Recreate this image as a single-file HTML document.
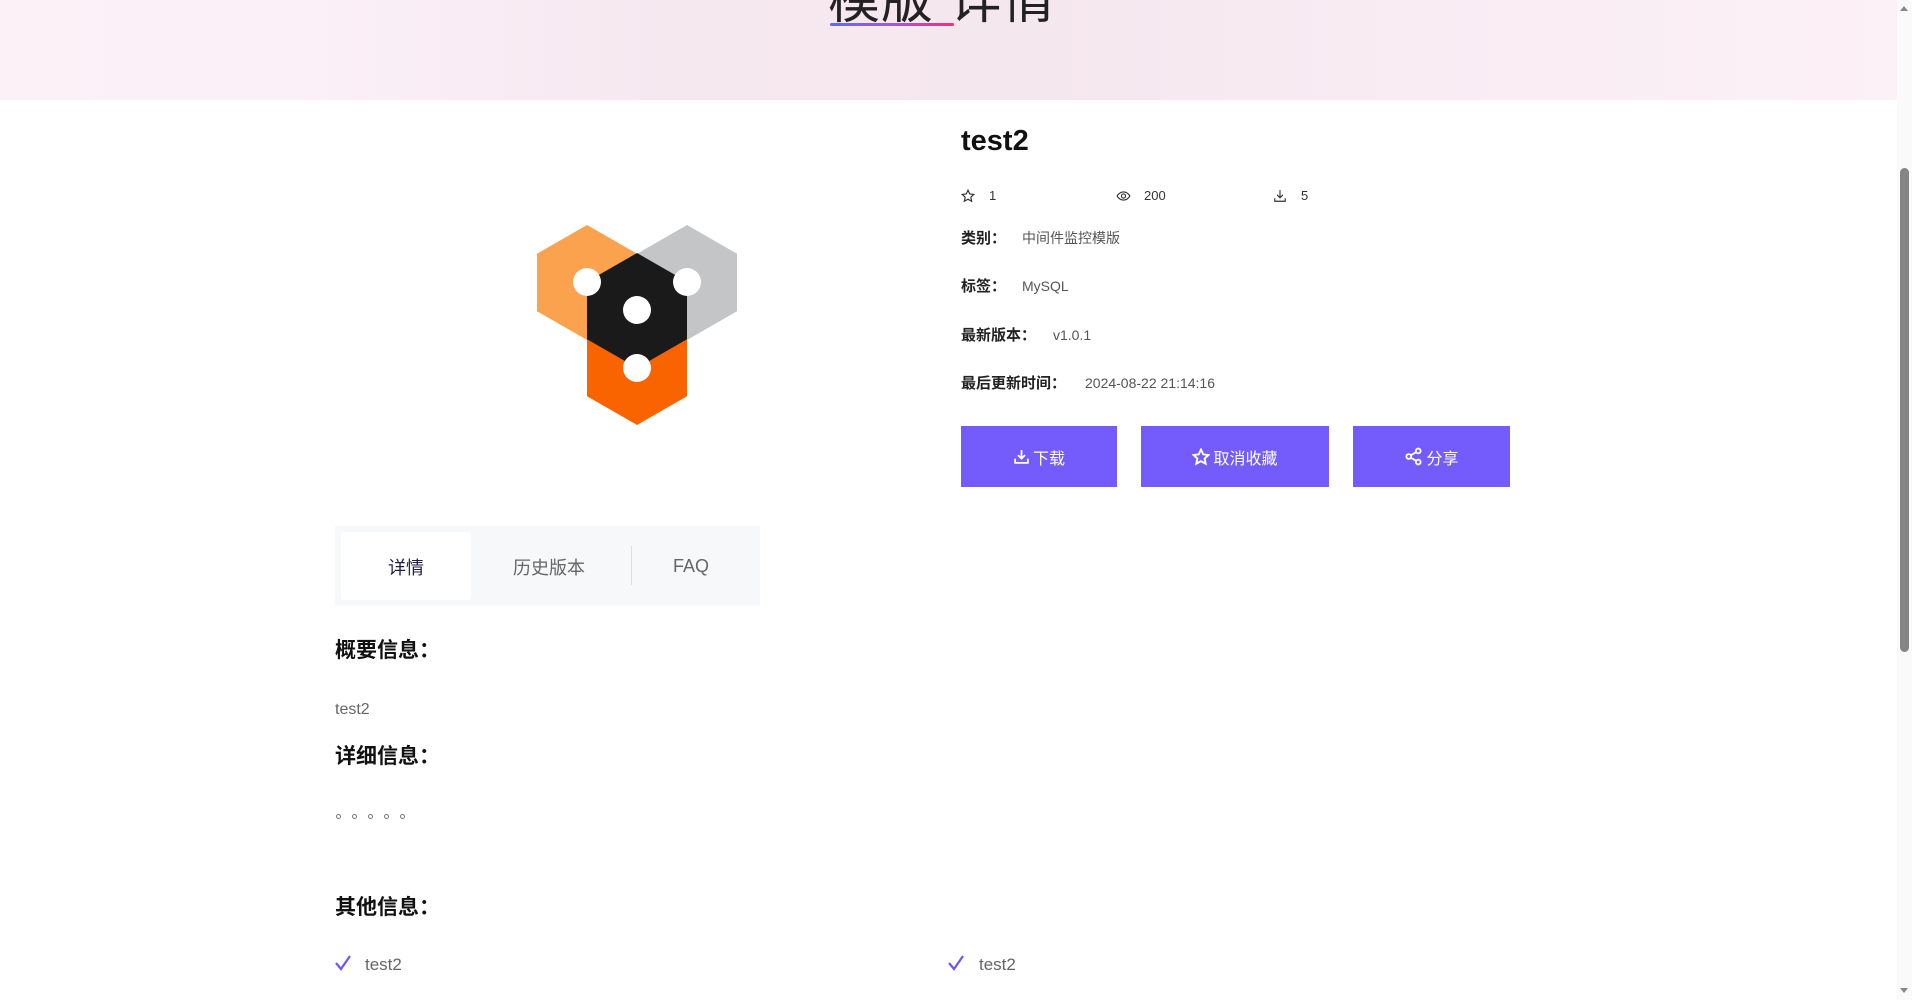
<!DOCTYPE html>
<html><head><meta charset="utf-8"><style>
*{margin:0;padding:0;box-sizing:border-box}
body{width:1912px;height:1000px;overflow:hidden;background:#fff;font-family:"Liberation Sans","Noto Sans CJK SC",sans-serif;position:relative;color:#333}
.a{position:absolute;white-space:nowrap}
.hdr{left:0;top:0;width:1897px;height:100px;background:linear-gradient(90deg,#fbf1f7 0%,#fcf0f8 15%,#f6e8ef 35%,#f5e7ee 55%,#f9ecf3 75%,#fcf1f7 100%)}
.lbl{font-size:15px;font-weight:bold;color:#222;font-family:"Noto Sans CJK SC",sans-serif;line-height:20px}
.val{font-size:14px;color:#555;line-height:20px}
.btn{top:426px;height:61px;background:#735cfb;color:#fff;font-size:16px;display:flex;align-items:center;justify-content:center;gap:3px}
.h2{font-size:21px;font-weight:bold;color:#111;left:335px;font-family:"Noto Sans CJK SC",sans-serif;line-height:28px}
.st{font-size:13px;color:#333}
.dot{position:absolute;top:814px;width:5px;height:5px;border:1px solid #777;border-radius:50%}
</style></head><body>
<div class="a hdr"></div>
<div class="a" style="left:828px;top:-42px;font-size:52px;color:#222;letter-spacing:1px">模版 详情</div>
<div class="a" style="left:830px;top:23px;width:124px;height:3px;background:linear-gradient(90deg,#5b6cf0,#a15ad8,#f0307a);border-radius:2px"></div>

<div class="a" style="left:1897px;top:0;width:15px;height:1000px;background:#fafafa"></div>
<div class="a" style="left:1900px;top:168px;width:9px;height:484px;background:#858585;border-radius:5px"></div>
<div class="a" style="left:1900px;top:6px;width:0;height:0;border-left:4px solid transparent;border-right:4px solid transparent;border-bottom:5px solid #888"></div>
<div class="a" style="left:1900px;top:988px;width:0;height:0;border-left:4px solid transparent;border-right:4px solid transparent;border-top:5px solid #888"></div>

<svg class="a" style="left:520px;top:215px" width="240" height="230" viewBox="520 215 240 230">
<polygon fill="#fba24f" points="587,225 637,253.75 637,311.25 587,340 537,311.25 537,253.75"/>
<polygon fill="#c4c5c7" points="687,225 737,253.75 737,311.25 687,340 637,311.25 637,253.75"/>
<polygon fill="#fa6400" points="637,310 687,338.75 687,396.25 637,425 587,396.25 587,338.75"/>
<polygon fill="#1a1a1a" points="637,253 687,281.75 687,339.25 637,368 587,339.25 587,281.75"/>
<circle cx="587" cy="282" r="14" fill="#fff"/>
<circle cx="687" cy="282" r="14" fill="#fff"/>
<circle cx="637" cy="310" r="14" fill="#fff"/>
<circle cx="637" cy="368" r="14" fill="#fff"/>
</svg>

<div class="a" style="left:961px;top:125px;font-size:29px;font-weight:bold;color:#111">test2</div>
<svg class="a" style="left:961px;top:189px" width="14" height="14" viewBox="0 0 24 24"><path d="M12 2l3 6.5 7 .8-5.2 4.8 1.5 7L12 17.5 5.7 21l1.5-7L2 9.3l7-.8z" fill="none" stroke="#333" stroke-width="2"/></svg>
<div class="a st" style="left:989px;top:188px">1</div>
<svg class="a" style="left:1116px;top:189px" width="15" height="14" viewBox="0 0 24 24"><path d="M1 12s4-7 11-7 11 7 11 7-4 7-11 7S1 12 1 12z" fill="none" stroke="#333" stroke-width="2"/><circle cx="12" cy="12" r="3.5" fill="none" stroke="#333" stroke-width="2"/></svg>
<div class="a st" style="left:1144px;top:188px">200</div>
<svg class="a" style="left:1273px;top:189px" width="14" height="14" viewBox="0 0 24 24"><path d="M12 2v13M7 10l5 5 5-5M3 16v5h18v-5" fill="none" stroke="#333" stroke-width="2"/></svg>
<div class="a st" style="left:1301px;top:188px">5</div>

<div class="a lbl" style="left:961px;top:228px">类别：</div><div class="a val" style="left:1022px;top:228px">中间件监控模版</div>
<div class="a lbl" style="left:961px;top:276px">标签：</div><div class="a val" style="left:1022px;top:276px">MySQL</div>
<div class="a lbl" style="left:961px;top:325px">最新版本：</div><div class="a val" style="left:1053px;top:325px">v1.0.1</div>
<div class="a lbl" style="left:961px;top:373px">最后更新时间：</div><div class="a val" style="left:1085px;top:373px">2024-08-22 21:14:16</div>

<div class="a btn" style="left:961px;width:156px"><svg width="17" height="17" viewBox="0 0 24 24"><path d="M12 3v12M7 10l5 5 5-5M3 15v6h18v-6" fill="none" stroke="#fff" stroke-width="2.5"/></svg>下载</div>
<div class="a btn" style="left:1141px;width:188px"><svg width="18" height="18" viewBox="0 0 24 24"><path d="M12 2l3 6.5 7 .8-5.2 4.8 1.5 7L12 17.5 5.7 21l1.5-7L2 9.3l7-.8z" fill="none" stroke="#fff" stroke-width="2.5"/></svg>取消收藏</div>
<div class="a btn" style="left:1353px;width:157px"><svg width="19" height="19" viewBox="0 0 24 24"><circle cx="18" cy="5" r="3" fill="none" stroke="#fff" stroke-width="2.3"/><circle cx="6" cy="12" r="3" fill="none" stroke="#fff" stroke-width="2.3"/><circle cx="18" cy="19" r="3" fill="none" stroke="#fff" stroke-width="2.3"/><path d="M8.6 10.5l6.8-4M8.6 13.5l6.8 4" stroke="#fff" stroke-width="2.3"/></svg>分享</div>

<div class="a" style="left:335px;top:526px;width:425px;height:80px;background:#f7f8fa"></div>
<div class="a" style="left:341px;top:532px;width:130px;height:68px;background:#fff;border-radius:3px"></div>
<div class="a" style="left:341px;top:554px;width:130px;text-align:center;font-size:18px;color:#1e1b4b">详情</div>
<div class="a" style="left:489px;top:554px;width:120px;text-align:center;font-size:18px;color:#666">历史版本</div>
<div class="a" style="left:631px;top:546px;width:1px;height:39px;background:#ddd"></div>
<div class="a" style="left:641px;top:556px;width:100px;text-align:center;font-size:18px;color:#666">FAQ</div>

<div class="a h2" style="top:635px">概要信息：</div>
<div class="a" style="left:335px;top:701px;font-size:16px;color:#666">test2</div>
<div class="a h2" style="top:741px">详细信息：</div>
<div class="a" style="left:-9999px;top:806px;font-size:1px;color:#fff">。。。。。</div>
<div class="dot" style="left:336px"></div><div class="dot" style="left:352px"></div><div class="dot" style="left:368px"></div><div class="dot" style="left:384px"></div><div class="dot" style="left:400px"></div>
<div class="a h2" style="top:892px">其他信息：</div>
<svg class="a" style="left:335px;top:955px" width="16" height="16" viewBox="0 0 16 16"><path d="M1 8l5 6L15 1" fill="none" stroke="#6d55f5" stroke-width="2.2"/></svg>
<div class="a" style="left:365px;top:955px;font-size:17px;color:#666">test2</div>
<svg class="a" style="left:948px;top:955px" width="16" height="16" viewBox="0 0 16 16"><path d="M1 8l5 6L15 1" fill="none" stroke="#6d55f5" stroke-width="2.2"/></svg>
<div class="a" style="left:979px;top:955px;font-size:17px;color:#666">test2</div>
</body></html>
